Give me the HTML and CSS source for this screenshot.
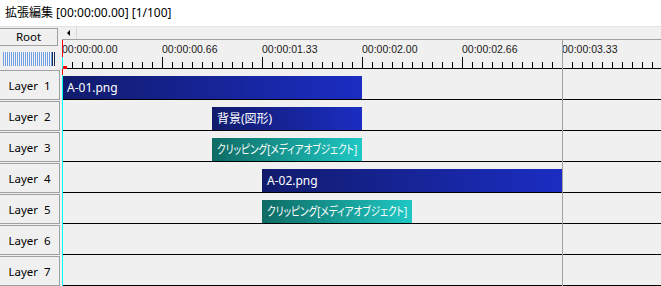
FILE: index.html
```html
<!DOCTYPE html>
<html lang="ja">
  <head>
    <meta charset="UTF-8" />
    <title>拡張編集</title>
    <link rel="stylesheet" href="styles.css">
  </head>
  <body>
    <div class="title">拡張編集 [00:00:00.00] [1/100]</div>

    <div class="editor">
      <div class="side">
        <div class="side-head">
          <div class="root-btn">Root</div>
          <div class="zoom-slider"></div>
        </div>
        <div class="layer-btn">Layer  1</div>
        <div class="layer-btn">Layer  2</div>
        <div class="layer-btn">Layer  3</div>
        <div class="layer-btn">Layer  4</div>
        <div class="layer-btn">Layer  5</div>
        <div class="layer-btn">Layer  6</div>
        <div class="layer-btn">Layer  7</div>
      </div>

      <div class="timeline">
        <div class="scrollbar">
          <div class="scroll-left"></div>
        </div>

        <div class="ruler">
          <div class="ruler-labels">
            <span class="tick-label">00:00:00.00</span>
            <span class="tick-label">00:00:00.66</span>
            <span class="tick-label">00:00:01.33</span>
            <span class="tick-label">00:00:02.00</span>
            <span class="tick-label">00:00:02.66</span>
            <span class="tick-label">00:00:03.33</span>
          </div>
          <div class="ticks"></div>
        </div>

        <div class="row">
          <div class="clip clip-image" style="left: 0; width: 300px;">A-01.png</div>
        </div>
        <div class="row">
          <div class="clip clip-image" style="left: 150px; width: 150px;">背景(図形)</div>
        </div>
        <div class="row">
          <div class="clip clip-filter" style="left: 150px; width: 150px;">
            <span class="clip-text">クリッピング[メディアオブジェクト]</span>
          </div>
        </div>
        <div class="row">
          <div class="clip clip-image" style="left: 200px; width: 300px;">A-02.png</div>
        </div>
        <div class="row">
          <div class="clip clip-filter" style="left: 200px; width: 150px;">
            <span class="clip-text">クリッピング[メディアオブジェクト]</span>
          </div>
        </div>
        <div class="row"></div>
        <div class="row"></div>

        <!-- scene end + current frame cursor -->
        <div class="end-line"></div>
        <div class="cursor"></div>
        <div class="cursor-mark"></div>
      </div>
    </div>
  </body>
</html>
```

FILE: styles.css
```css
* {
  box-sizing: border-box;
}

body {
  margin: 0;
  width: 661px;
  height: 286px;
  overflow: hidden;
  background: #f0f0f0;
  font-family: "Noto Sans", "Noto Sans CJK JP", sans-serif;
  font-size: 12px;
  color: #000;
}

.title {
  height: 27px;
  padding-left: 5px;
  line-height: 25px;
  background: #fff;
  border-bottom: 1px solid #e3e3e3;
  white-space: nowrap;
}

.editor {
  display: flex;
}

/* left column */
.side {
  width: 62px;
  flex: none;
}

.side-head {
  height: 43px;
  padding-top: 1px;
}

.root-btn {
  width: 58px;
  height: 18px;
  border: 1px solid #a0a0a0;
  border-left: none;
  text-align: center;
  line-height: 15px;
  font-size: 11.5px;
}

.zoom-slider {
  position: relative;
  width: 52px;
  height: 14px;
  margin: 6px 0 0 3px;
  background: repeating-linear-gradient(to right, #6f9de2 0 1px, #f6f6f6 1px 2px);
}

.zoom-slider::after {
  content: "";
  position: absolute;
  right: 0;
  top: 0;
  width: 3px;
  height: 14px;
  background: linear-gradient(to right, #1e2c4e 0 1px, #f6f6f6 1px 2px, #1e2c4e 2px 3px);
}

.layer-btn {
  width: 60px;
  height: 30px;
  margin-bottom: 1px;
  border: 1px solid #a0a0a0;
  border-left: none;
  text-align: center;
  line-height: 29px;
  font-size: 11.5px;
  white-space: pre;
}

/* timeline */
.timeline {
  position: relative;
  flex: 1;
}

.scrollbar {
  height: 13px;
  border-bottom: 1px solid #a0a0a0;
}

.scroll-left {
  position: relative;
  width: 15px;
  height: 12px;
  border-right: 1px solid #d8d8d8;
}

.scroll-left::before {
  content: "";
  position: absolute;
  left: 5px;
  top: 3px;
  border-right: 3px solid #000;
  border-top: 3px solid transparent;
  border-bottom: 3px solid transparent;
}

.ruler {
  height: 29px;
  border-bottom: 1px solid #000;
}

.ruler-labels {
  display: flex;
  height: 17px;
  padding-top: 3px;
}

.tick-label {
  flex: none;
  width: 100px;
  font-family: "Liberation Sans", Arial, sans-serif;
  font-size: 10.5px;
  line-height: 12px;
  color: #1a1a1a;
}

.ticks {
  height: 11px;
  background:
    repeating-linear-gradient(to right, #000 0 1px, transparent 1px 10px) bottom left / 100% 6px no-repeat,
    repeating-linear-gradient(to right, #000 0 1px, transparent 1px 100px);
}

.row {
  position: relative;
  height: 31px;
  border-bottom: 1px solid #000;
}

.clip {
  position: absolute;
  top: 7px;
  height: 23px;
  padding-left: 5px;
  line-height: 23px;
  color: #fff;
  white-space: nowrap;
  overflow: hidden;
}

.clip-image {
  background: linear-gradient(to right, #111b6c, #1b2dc2);
}

.clip-filter {
  background: linear-gradient(to right, #0e6b64, #1fc8c4);
}

.clip-text {
  display: inline-block;
  font-size: 12px;
  font-feature-settings: "palt";
  transform: scaleX(0.8);
  transform-origin: left center;
}

.end-line {
  position: absolute;
  left: 500px;
  top: 13px;
  bottom: 0;
  width: 1px;
  background: #a0a0a0;
}

.cursor {
  position: absolute;
  left: 0;
  top: 13px;
  bottom: 0;
  width: 1px;
  background: linear-gradient(to bottom, #f00 0 17px, #00ffff 17px 29px, #f00 29px 35px, #00ffff 35px);
}

.cursor-mark {
  position: absolute;
  left: 1px;
  top: 39px;
  width: 4px;
  height: 3px;
  background: #f00;
}
```
